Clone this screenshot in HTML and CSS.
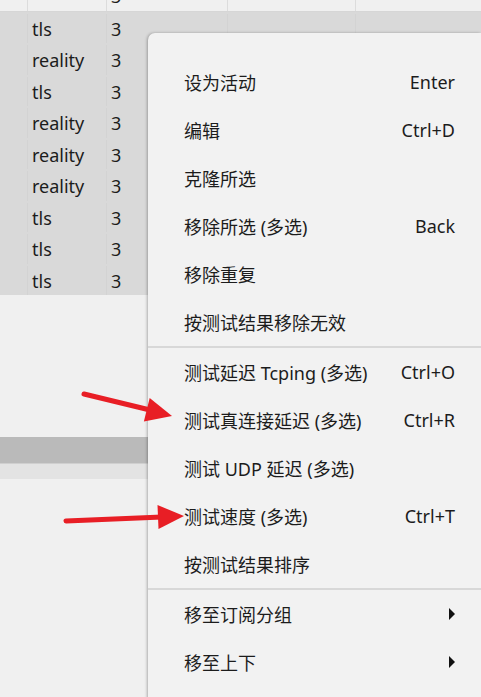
FILE: index.html
```html
<!DOCTYPE html>
<html lang="zh-CN">
<head>
    <meta charset="UTF-8">
    <title>服务器列表</title>
    <link rel="stylesheet" href="styles.css">
</head>
<body>
<div id="list">
    <div class="row cut">
        <span class="c0"></span><span class="c1"></span><span class="c2">3</span><span class="c3"></span><span class="c4"></span>
    </div>
    <div class="row sel"><span class="c0"></span><span class="c1">tls</span><span class="c2">3</span><span class="c3"></span><span class="c4"></span></div>
    <div class="row sel"><span class="c0"></span><span class="c1">reality</span><span class="c2">3</span><span class="c3"></span><span class="c4"></span></div>
    <div class="row sel"><span class="c0"></span><span class="c1">tls</span><span class="c2">3</span><span class="c3"></span><span class="c4"></span></div>
    <div class="row sel"><span class="c0"></span><span class="c1">reality</span><span class="c2">3</span><span class="c3"></span><span class="c4"></span></div>
    <div class="row sel"><span class="c0"></span><span class="c1">reality</span><span class="c2">3</span><span class="c3"></span><span class="c4"></span></div>
    <div class="row sel"><span class="c0"></span><span class="c1">reality</span><span class="c2">3</span><span class="c3"></span><span class="c4"></span></div>
    <div class="row sel"><span class="c0"></span><span class="c1">tls</span><span class="c2">3</span><span class="c3"></span><span class="c4"></span></div>
    <div class="row sel"><span class="c0"></span><span class="c1">tls</span><span class="c2">3</span><span class="c3"></span><span class="c4"></span></div>
    <div class="row sel"><span class="c0"></span><span class="c1">tls</span><span class="c2">3</span><span class="c3"></span><span class="c4"></span></div>
    <div class="empty"></div>
    <div class="hscroll"></div>
    <div class="status"></div>
</div>

<div id="menu">
    <div class="item"><span>设为活动</span><span class="key">Enter</span></div>
    <div class="item"><span>编辑</span><span class="key">Ctrl+D</span></div>
    <div class="item"><span>克隆所选</span></div>
    <div class="item"><span>移除所选 (多选)</span><span class="key">Back</span></div>
    <div class="item"><span>移除重复</span></div>
    <div class="item"><span>按测试结果移除无效</span></div>
    <div class="sep"></div>
    <div class="item"><span>测试延迟 Tcping (多选)</span><span class="key">Ctrl+O</span></div>
    <div class="item"><span>测试真连接延迟 (多选)</span><span class="key">Ctrl+R</span></div>
    <div class="item"><span>测试 UDP 延迟 (多选)</span></div>
    <div class="item"><span>测试速度 (多选)</span><span class="key">Ctrl+T</span></div>
    <div class="item"><span>按测试结果排序</span></div>
    <div class="sep"></div>
    <div class="item"><span>移至订阅分组</span><span class="sub"></span></div>
    <div class="item"><span>移至上下</span><span class="sub"></span></div>
</div>

<!-- red pointers drawn on top of the menu -->
<svg id="marks" width="481" height="697" viewBox="0 0 481 697">
    <line x1="84" y1="394" x2="150" y2="410" />
    <polygon points="172,416 149.7,398 143.9,421.5" />
    <line x1="66" y1="521" x2="162" y2="517" />
    <polygon points="184,516 157.5,505 158.5,529" />
</svg>
</body>
</html>
```

FILE: styles.css
```css
html, body {
    margin: 0;
    height: 100%;
    overflow: hidden;
}
body {
    background: #f0f0f0;
    font-family: "Noto Sans", "Noto Sans CJK SC", sans-serif;
    font-size: 18px;
    color: #1c1c1c;
    position: relative;
}
#list {
    display: flex;
    flex-direction: column;
}
.row {
    display: grid;
    grid-template-columns: 28px 79px 121px 128px 1fr;
    height: 31.45px;
    line-height: 30px;
    padding-top: 2px;
    box-sizing: border-box;
}
.row span {
    padding-left: 4px;
    border-right: 1px solid #dcdcdc;
    overflow: hidden;
    white-space: nowrap;
}
.row span.c4 {
    border-right: none;
}
.row.cut {
    margin-top: -19px;
    height: 31px;
    padding-top: 0;
    border-bottom: 1px solid #d6d6d6;
}
.row.sel {
    background: #d9d9d9;
}
.row.sel span {
    border-right-color: #d3d3d3;
}
.empty {
    height: 142px;
}
.hscroll {
    height: 26px;
    background: #bababa;
    border-bottom: 1px solid #cfcfcf;
}
.status {
    height: 15px;
    background: #e3e3e3;
}

#menu {
    position: absolute;
    left: 148px;
    top: 33px;
    right: 0;
    bottom: -20px;
    background: #f2f2f2;
    border-top-left-radius: 7px;
    box-shadow: -1px 0 3px rgba(0, 0, 0, 0.28);
    padding-top: 25px;
}
.item {
    display: flex;
    align-items: center;
    justify-content: space-between;
    height: 48px;
    padding: 0 26px 0 36px;
    white-space: nowrap;
}
.key {
    color: #1c1c1c;
}
.sub {
    width: 0;
    height: 0;
    border-top: 6px solid transparent;
    border-bottom: 6px solid transparent;
    border-left: 6px solid #111;
}
.sep {
    height: 2px;
    background: #d8d8d8;
}

#marks {
    position: absolute;
    left: 0;
    top: 0;
    pointer-events: none;
}
#marks line {
    stroke: #e81e25;
    stroke-width: 5;
    stroke-linecap: round;
}
#marks polygon {
    fill: #e81e25;
}
```
